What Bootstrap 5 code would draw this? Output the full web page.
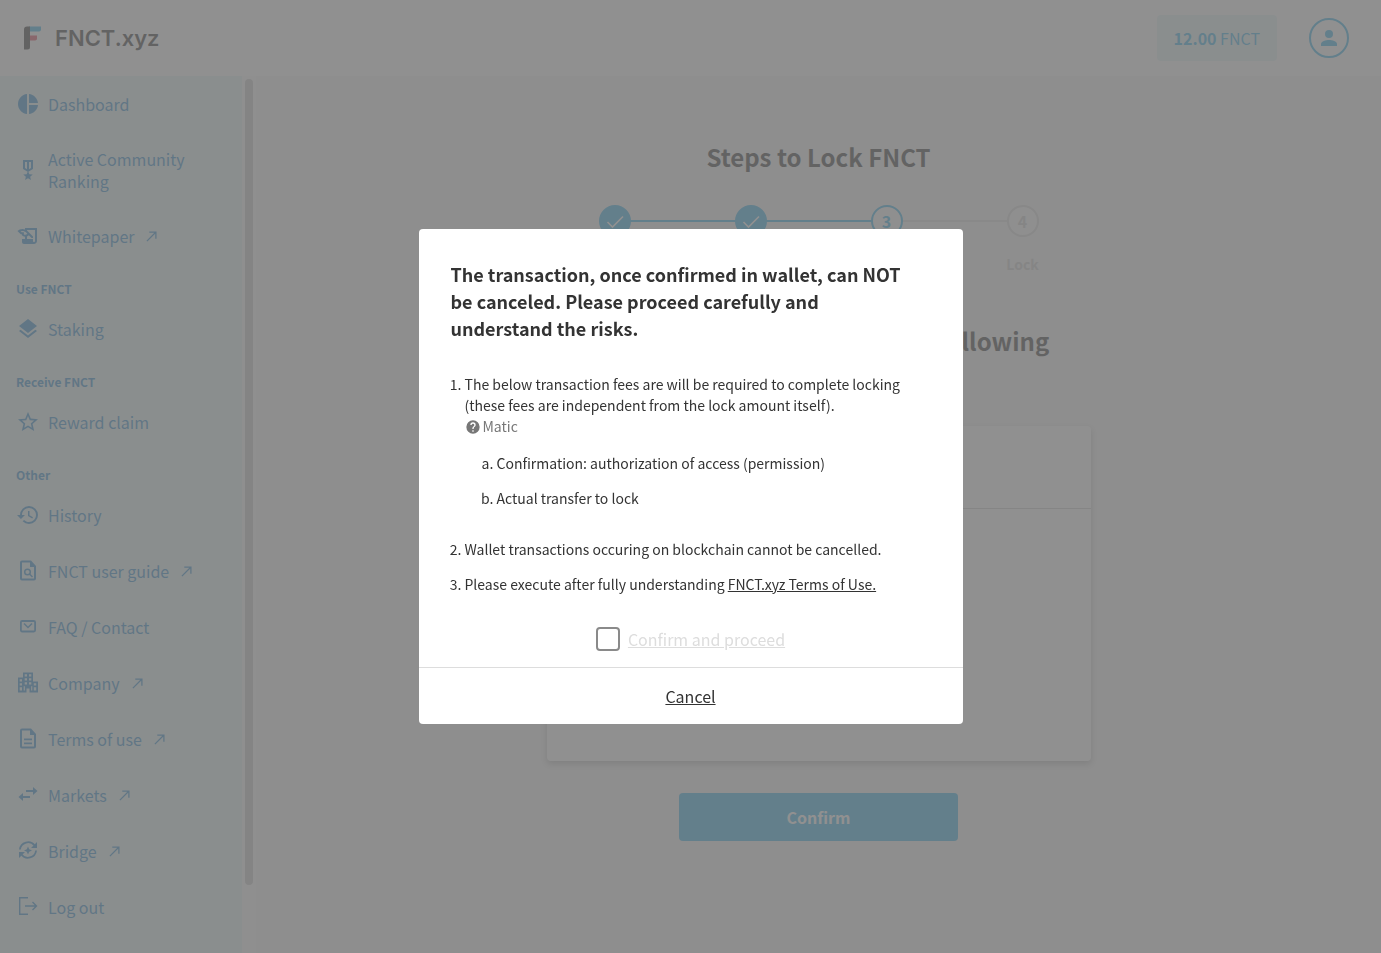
<!DOCTYPE html>
<html lang="en">
<head>
<meta charset="utf-8">
<meta name="viewport" content="width=device-width, initial-scale=1">
<title>Lock FNCT | FNCT.xyz</title>
<link href="https://cdn.jsdelivr.net/npm/bootstrap@5.3.0/dist/css/bootstrap.min.css" rel="stylesheet">
<style>
  :root {
    --ink: #333;
    --accent: #33b0e7;
    --nav-ink: #2a8bcc;
    --nav-bg: #e4f3f6;
    --rule: #ccc;
  }
  body {
    font-family: "Noto Sans CJK JP", "Noto Sans", sans-serif;
    font-size: 16px;
    color: var(--ink);
    background: #f4f4f4;
  }
  svg { display: block; flex: none; fill: currentColor; }
  .app { height: 100vh; overflow: hidden; }
  .topbar { min-height: 76px; padding: 0 32px 0 24px; background: #fff; }
  .brand { gap: 14px; color: var(--ink); font: 600 22px/32px Inter, sans-serif; }
  .balance { padding: 12px 17px; line-height: 22px; font-size: 16px; border-radius: 4px; background: var(--nav-bg); color: var(--accent); }
  .avatar { width: 40px; height: 40px; border: 2px solid var(--accent); color: var(--accent); background: none; }
  .body-row { min-height: 0; }
  .sidebar { width: 256px; background: #fafafa; }
  .side-nav { background: var(--nav-bg); }
  .side-link { gap: 8px; min-height: 56px; padding: 16px; color: var(--nav-ink); line-height: 22px; text-decoration: none; }
  .side-link .ext { margin-left: 4px; }
  .side-title { margin: 0; padding: 15px 16px 2px; font-size: 12px; line-height: 20px; font-weight: 700; color: var(--nav-ink); }
  .scroll-track { width: 14px; padding: 3px 3px 68px; }
  .scroll-thumb { width: 8px; border-radius: 4px; background: #c8c8c8; }
  .content { padding: 63px 16px 0; }
  .content h1, .content h2 { font-size: 24px; line-height: 36px; font-weight: 700; margin: 0; }
  .content h2 { margin-top: 49px; }
  .column { width: 100%; max-width: 544px; }
  .steps { margin-top: 30px; list-style: none; padding: 0; }
  .step { position: relative; flex: 1; color: var(--rule); font-weight: 700; font-size: 14px; line-height: 20px; }
  .dot { position: relative; z-index: 1; width: 32px; height: 32px; margin-bottom: 17px; border: 2px solid #d8d8d8; background: #f9f9f9; font-size: 16px; }
  .step + .step::before { content: ""; position: absolute; top: 15px; left: -50%; width: 100%; height: 2px; background: #dedede; }
  .step.done, .step.now { color: var(--accent); }
  .step.done::before, .step.now::before { background: var(--accent) !important; }
  .done .dot { background: var(--accent); border-color: var(--accent); color: #fff; }
  .now .dot { border-color: var(--accent); }
  .panel { margin-top: 67px; min-height: 335px; border: 0; border-radius: 4px; box-shadow: 0 3px 6px rgba(0,0,0,.25); }
  .panel-head { min-height: 83px; border-bottom: 1px solid var(--rule); }
  .confirm-btn { margin-top: 32px; width: 279px; height: 48px; border: 0; border-radius: 4px; background: var(--accent); color: #fff; font-weight: 700; }
  .confirm-btn:hover { background: var(--accent); color: #fff; }
  .veil { background: rgba(113,113,113,.78); }
  .veil .modal-dialog { max-width: 544px; }
  .veil .modal-content { border: 0; border-radius: 4px; color: var(--ink); }
  .veil .modal-body { padding: 32px 32px 14px; }
  .veil h3 { margin: 0 0 32px; padding-right: 16px; font-size: 18px; line-height: 27px; font-weight: 700; }
  .veil ol { margin: 0; padding-left: 14px; font-size: 14px; line-height: 21px; }
  .veil ol li + li { margin-top: 14px; }
  .veil ol ol { margin: 16px 0 30px; padding-left: 32px; list-style: lower-alpha; }
  .veil a, .veil .cancel { color: inherit; text-decoration: underline; }
  .fee { gap: 2px; color: #777; }
  .agree { gap: 8px; margin-top: 32px; padding: 0; min-height: 24px; }
  .agree .form-check-input { float: none; margin: 0; width: 24px; height: 24px; border: 2px solid #8a8a8a; border-radius: 4px; }
  .agree label { color: #ddd; line-height: 24px; text-decoration: underline; }
  .veil .modal-footer { padding: 0; border-top: 1px solid #ddd; }
  .cancel { margin: 0; height: 56px; border: 0; font-size: 16px; }
</style>
</head>
<body>
<svg class="d-none" aria-hidden="true">
  <symbol id="ext" viewBox="0 0 12 12"><path fill="none" stroke="currentColor" stroke-width="1.4" d="M1 11 10.6 1.4M3.6 1.2h7.2v7.2"/></symbol>
  <symbol id="tick" viewBox="0 0 20 20"><path fill="none" stroke="currentColor" stroke-width="1.6" d="m2.500 11 5 5L18 5.500"/></symbol>
</svg>

<div class="app d-flex flex-column">
  <header class="topbar d-flex align-items-center justify-content-between">
    <a class="brand d-flex align-items-center text-decoration-none" href="#">
      <svg width="17" height="24" viewBox="0 0 17 24"><path fill="#33b0e7" d="M5 .5h12v3a2 2 0 0 1-2 2H5z"/><path fill="#e0455a" d="M5 9.500h8v2.500a2 2 0 0 1-2 2.500H5z"/><path fill="#333" d="M3 .5h3v20.500a2.500 2.500 0 0 1-2.500 2.500H0V3.500a3 3 0 0 1 3-3z"/></svg>
      <span>FNCT.xyz</span>
    </a>
    <div class="d-flex align-items-center gap-3">
      <div class="balance me-3"><b>12.00</b> FNCT</div>
      <button class="avatar btn rounded-circle p-0 d-flex align-items-center justify-content-center" type="button" aria-label="Account">
        <svg width="24" height="24" viewBox="0 0 24 24"><circle cx="12" cy="8" r="4"/><path d="M4 20v-2c0-2.700 5-4 8-4s8 1.300 8 4v2z"/></svg>
      </button>
    </div>
  </header>

  <div class="body-row d-flex flex-grow-1">
    <aside class="sidebar d-flex flex-shrink-0">
      <nav class="side-nav flex-grow-1">
        <a class="side-link d-flex align-items-center" href="#"><svg width="24" height="24" viewBox="0 0 24 24"><path d="M11 2v20c-5.070-.5-9-4.790-9-10s3.930-9.500 9-10zm2.030 0v8.990H22c-.47-4.740-4.240-8.520-8.970-8.990zm0 11.010V22c4.740-.47 8.500-4.250 8.970-8.990z"/></svg>Dashboard</a>
        <a class="side-link d-flex align-items-center" href="#"><svg width="24" height="24" viewBox="0 0 24 24"><path fill-rule="evenodd" d="M17 10.430V2H7v8.430c0 .35.18.68.49.86l4.180 2.510-.99 2.340-3.410.29 2.590 2.240L9.070 22 12 20.230 14.930 22l-.78-3.330 2.590-2.240-3.410-.29-.99-2.340 4.180-2.510c.3-.18.480-.5.480-.86zM11 11.230l-2-1.200V4h2zM13 11.230V4h2v6.030z"/></svg>Active Community Ranking</a>
        <a class="side-link d-flex align-items-center" href="#"><svg width="24" height="24" viewBox="0 0 24 24"><path d="M9 4v1.380c-.83-.33-1.720-.5-2.610-.5-1.790 0-3.580.68-4.950 2.050l3.330 3.330h1.110v1.110c.86.86 1.980 1.310 3.110 1.360V15H6v3c0 1.100.9 2 2 2h10c1.660 0 3-1.340 3-3V4zm-1.110 6.410V8.260H5.610L4.570 7.220a5.070 5.070 0 0 1 1.820-.34c1.340 0 2.590.52 3.540 1.460l1.410 1.410-.2.2a2.700 2.700 0 0 1-1.920.8c-.47 0-.93-.12-1.330-.34zM19 17c0 .55-.45 1-1 1s-1-.45-1-1v-2h-6v-2.590c.57-.23 1.100-.57 1.560-1.030l.2-.2L15.590 14H17v-1.410l-6-5.970V6h8z"/></svg>Whitepaper <svg class="ext" width="11" height="11"><use href="#ext"/></svg></a>

        <h6 class="side-title">Use FNCT</h6>
        <a class="side-link d-flex align-items-center" href="#"><svg width="24" height="24" viewBox="0 0 24 24"><path d="m11.990 18.540-7.370-5.730L3 14.070l9 7 9-7-1.630-1.270zM12 16l7.360-5.730L21 9l-9-7-9 7 1.630 1.270z"/></svg>Staking</a>

        <h6 class="side-title">Receive FNCT</h6>
        <a class="side-link d-flex align-items-center" href="#"><svg width="24" height="24" viewBox="0 0 24 24"><path d="m22 9.240-7.190-.62L12 2 9.190 8.630 2 9.240l5.460 4.730L5.820 21 12 17.270 18.180 21l-1.630-7.030zM12 15.400l-3.760 2.270 1-4.280-3.320-2.880 4.380-.38L12 6.100l1.710 4.040 4.380.38-3.320 2.880 1 4.280z"/></svg>Reward claim</a>

        <h6 class="side-title">Other</h6>
        <a class="side-link d-flex align-items-center" href="#"><svg width="24" height="24" viewBox="0 0 24 24"><path d="M13 3a9 9 0 0 0-9 9H1l3.890 3.890.07.14L9 12H6c0-3.870 3.130-7 7-7s7 3.130 7 7-3.130 7-7 7c-1.930 0-3.680-.79-4.940-2.060l-1.420 1.420A8.954 8.954 0 0 0 13 21a9 9 0 0 0 0-18zm-1 5v5l4.280 2.540.72-1.210-3.500-2.080V8z"/></svg>History</a>
        <a class="side-link d-flex align-items-center" href="#"><svg width="24" height="24" viewBox="0 0 24 24"><path fill-rule="evenodd" d="M6 1.500h9l5 5.500V19.500a2 2 0 0 1-2 2H6a2 2 0 0 1-2-2V3.500a2 2 0 0 1 2-2zm0 2v16h12V8h-4V3.500z"/><g fill="none" stroke="currentColor" stroke-width="1.500"><circle cx="11.500" cy="13" r="2.800"/><path d="m13.500 15 3 3"/></g></svg>FNCT user guide <svg class="ext" width="11" height="11"><use href="#ext"/></svg></a>
        <a class="side-link d-flex align-items-center" href="#"><svg width="24" height="24" viewBox="0 0 24 24"><g fill="none" stroke="currentColor"><rect x="4.900" y="6" width="14.200" height="10.500" rx="1.200" stroke-width="1.800"/><path stroke-width="1.500" d="m8 8.500 4 4 4-4"/></g></svg>FAQ / Contact</a>
        <a class="side-link d-flex align-items-center" href="#"><svg width="24" height="24" viewBox="0 0 24 24"><path fill-rule="evenodd" d="M7 1.500h10v9h5v11h-8.500v-4h-3v4H2V6.500h5zm1.700 1.700v2.300H11V3.200zm4.300 0v2.300h2.300V3.200zM8.700 7.200v2.300H11V7.200zm4.300 0v2.300h2.300V7.200zm-9.300 1v2.300H6V8.200zm0 4v2.300H6v-2.300zm0 4v3.300H6v-3.300zm5-5v2.300H11v-2.300zm4.300 0v2.300h2.300v-2.300zm4.800 1v2.300h2.400v-2.300zm0 4v3.300h2.400v-3.300zM7.700 15.200v4.300h1.200v-4.300zm7.400 0v4.300h1.200v-4.300z"/></svg>Company <svg class="ext" width="11" height="11"><use href="#ext"/></svg></a>
        <a class="side-link d-flex align-items-center" href="#"><svg width="24" height="24" viewBox="0 0 24 24"><path fill-rule="evenodd" d="M6 1.500h9l5 5.500V19.500a2 2 0 0 1-2 2H6a2 2 0 0 1-2-2V3.500a2 2 0 0 1 2-2zm0 2v16h12V8h-4V3.500zm2 8h8v1.800H8zm0 4h8v1.800H8z"/></svg>Terms of use <svg class="ext" width="11" height="11"><use href="#ext"/></svg></a>
        <a class="side-link d-flex align-items-center" href="#"><svg width="24" height="24" viewBox="0 0 24 24"><path d="M17 4l4.500 4-4.500 4V9h-7V7h7zM7 10l-4.500 4L7 18v-3h7v-2H7z"/></svg>Markets <svg class="ext" width="11" height="11"><use href="#ext"/></svg></a>
        <a class="side-link d-flex align-items-center" href="#"><svg width="24" height="24" viewBox="0 0 24 24"><path fill="none" stroke="currentColor" stroke-width="1.800" d="M3.900 10.500a8.200 8.200 0 0 1 14.700-4M20.100 11.500a8.200 8.200 0 0 1-14.700 4"/><path d="M21 3v6h-6zM3 19v-6h6zM12 7.500l1.200 2.800 2.800 1.200-2.800 1.200L12 15.500l-1.200-2.800L8 11.500l2.800-1.200z"/></svg>Bridge <svg class="ext" width="11" height="11"><use href="#ext"/></svg></a>
        <a class="side-link d-flex align-items-center" href="#"><svg width="24" height="24" viewBox="0 0 24 24"><path fill="none" stroke="currentColor" stroke-width="1.400" d="M12 2.700H3.700v16.600H12M9 11h11.500M16.500 7l4 4-4 4"/></svg>Log out</a>
      </nav>
      <div class="scroll-track d-flex"><div class="scroll-thumb"></div></div>
    </aside>

    <main class="content flex-grow-1 d-flex flex-column align-items-center">
      <h1>Steps to Lock FNCT</h1>
      <ol class="steps column d-flex text-center mb-0">
        <li class="step done d-flex flex-column align-items-center"><span class="dot rounded-circle d-flex align-items-center justify-content-center"><svg width="20" height="20"><use href="#tick"/></svg></span></li>
        <li class="step done d-flex flex-column align-items-center"><span class="dot rounded-circle d-flex align-items-center justify-content-center"><svg width="20" height="20"><use href="#tick"/></svg></span></li>
        <li class="step now d-flex flex-column align-items-center"><span class="dot rounded-circle d-flex align-items-center justify-content-center">3</span></li>
        <li class="step d-flex flex-column align-items-center"><span class="dot rounded-circle d-flex align-items-center justify-content-center">4</span>Lock</li>
      </ol>
      <h2>Please check and confirm the following</h2>
      <section class="panel column card"><div class="panel-head"></div></section>
      <button class="confirm-btn btn" type="button">Confirm</button>
    </main>
  </div>
</div>

<div class="modal veil d-block" tabindex="-1" role="dialog" aria-labelledby="notice">
  <div class="modal-dialog modal-dialog-centered">
    <div class="modal-content">
      <div class="modal-body">
        <h3 id="notice">The transaction, once confirmed in wallet, can NOT be canceled. Please proceed carefully and <br>understand the risks.</h3>
        <ol>
          <li>The below transaction fees are will be required to complete locking (these fees are independent from the lock amount itself).
            <div class="fee d-flex align-items-center"><svg width="16" height="16" viewBox="0 0 24 24"><path d="M12 2a10 10 0 1 0 0 20 10 10 0 0 0 0-20zm1 17h-2v-2h2zm2.070-7.750-.9.920C13.450 12.900 13 13.500 13 15h-2v-.5c0-1.100.45-2.100 1.170-2.830l1.240-1.260c.37-.36.59-.86.59-1.410a2 2 0 0 0-4 0H8a4 4 0 0 1 8 0c0 .88-.36 1.680-.93 2.250z"/></svg>Matic</div>
            <ol>
              <li>Confirmation: authorization of access (permission)</li>
              <li>Actual transfer to lock</li>
            </ol>
          </li>
          <li>Wallet transactions occuring on blockchain cannot be cancelled.</li>
          <li>Please execute after fully understanding <a href="#">FNCT.xyz Terms of Use.</a></li>
        </ol>
        <div class="agree form-check d-flex align-items-center justify-content-center">
          <input class="form-check-input" type="checkbox" id="agree">
          <label for="agree">Confirm and proceed</label>
        </div>
      </div>
      <div class="modal-footer justify-content-center">
        <button class="cancel btn p-0" type="button">Cancel</button>
      </div>
    </div>
  </div>
</div>
<script src="https://cdn.jsdelivr.net/npm/bootstrap@5.3.0/dist/js/bootstrap.bundle.min.js"></script>
</body>
</html>
